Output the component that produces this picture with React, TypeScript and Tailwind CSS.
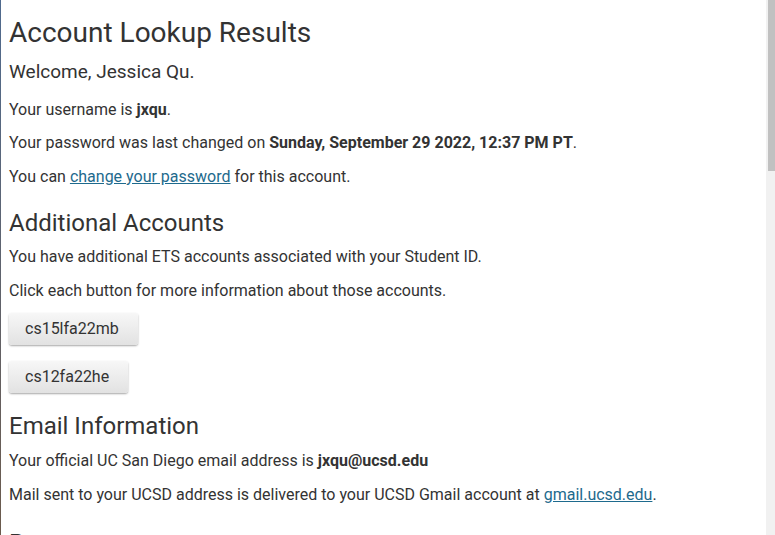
export default function App() {
  const accounts = ['cs15lfa22mb', 'cs12fa22he']

  return (
    <div className="flex h-[535px] w-[775px] overflow-hidden bg-white text-[#333333] font-['Roboto',sans-serif]">
      <div className="w-px shrink-0 bg-gradient-to-b from-[#4f6a8e] to-[#6b5a4c]" />

      <main className="flex-1 pl-[8px]">
        <h1 className="mt-[18px] text-[28px] leading-[30px]">Account Lookup Results</h1>
        <h2 className="mt-[12px] text-[19px] leading-[24px]">Welcome, Jessica Qu.</h2>

        <p className="mt-[15px] text-[16px] leading-[22px]">
          Your username is <b>jxqu</b>.
        </p>
        <p className="mt-[11px] text-[16px] leading-[22px]">
          Your password was last changed on <b>Sunday, September 29 2022, 12:37 PM PT</b>.
        </p>
        <p className="mt-[12px] text-[16px] leading-[22px]">
          You can{' '}
          <a href="#" className="text-[#1e6a8d] underline">
            change your password
          </a>{' '}
          for this account.
        </p>

        {/* Additional Accounts */}
        <h2 className="mt-[21px] text-[24px] leading-[28px]">Additional Accounts</h2>
        <p className="mt-[9px] text-[16px] leading-[22px]">
          You have additional ETS accounts associated with your Student ID.
        </p>
        <p className="mt-[12px] text-[16px] leading-[22px]">
          Click each button for more information about those accounts.
        </p>
        <div className="mt-[11px] flex flex-col items-start gap-[16px]">
          {accounts.map((acct) => (
            <button
              key={acct}
              className="h-[32px] rounded-[3px] bg-gradient-to-b from-[#f7f7f7] to-[#e2e2e2] pl-[16px] pr-[19px] text-[16px] text-[#333333] shadow-[0_1px_2px_rgba(0,0,0,0.35)]"
            >
              {acct}
            </button>
          ))}
        </div>

        {/* Email Information */}
        <h2 className="mt-[19px] text-[24px] leading-[28px]">Email Information</h2>
        <p className="mt-[10px] text-[16px] leading-[22px]">
          Your official UC San Diego email address is <b>jxqu@ucsd.edu</b>
        </p>
        <p className="mt-[12px] text-[16px] leading-[22px]">
          Mail sent to your UCSD address is delivered to your UCSD Gmail account at{' '}
          <a href="#" className="text-[#1e6a8d] underline">
            gmail.ucsd.edu
          </a>
          .
        </p>
        <h2 className="mt-[23px] text-[24px] leading-[28px]">Programs</h2>
      </main>

      {/* scrollbar */}
      <div className="w-[9px] shrink-0 bg-[#f1f1f1] pl-[2px]">
        <div className="h-[171px] bg-[#c1c1c1]" />
      </div>
    </div>
  )
}
